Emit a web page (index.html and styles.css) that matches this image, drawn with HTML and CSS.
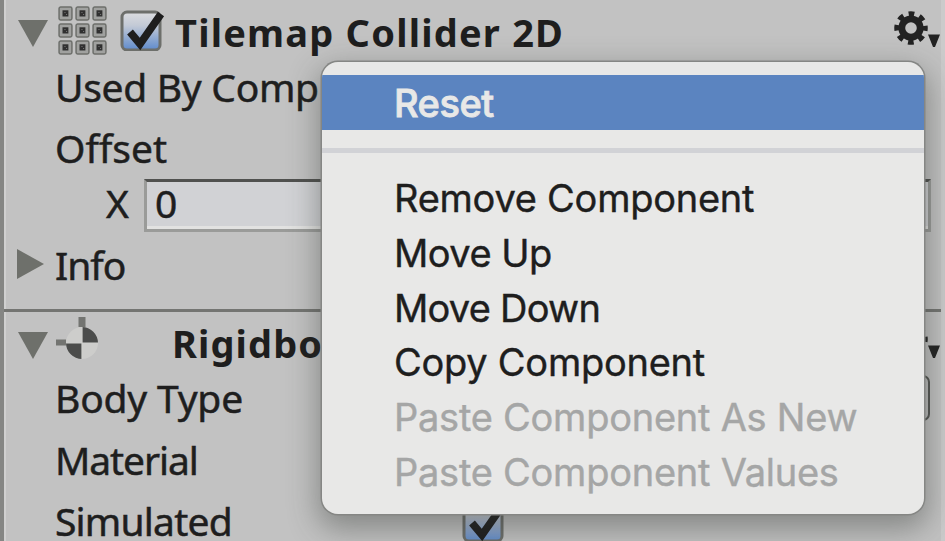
FILE: index.html
```
<!DOCTYPE html>
<html lang="en">
<head>
<meta charset="utf-8">
<title>Inspector</title>
<link rel="stylesheet" href="styles.css">
</head>
<body>
<svg class="defs" width="0" height="0">
  <defs>
    <linearGradient id="box" x1="0" y1="0" x2="0" y2="1">
      <stop offset="0" stop-color="#dcdddf"/><stop offset=".35" stop-color="#c3cad6"/><stop offset="1" stop-color="#5f8bcc"/>
    </linearGradient>
    <symbol id="check" viewBox="0 0 46 44">
      <rect x="2" y="5" width="38" height="38" rx="5" fill="url(#box)" stroke="#6d6f6b" stroke-width="3"/>
      <path d="M10 25l10 12L41 7" fill="none" stroke="#1e1e1e" stroke-width="7.500"/>
    </symbol>
    <symbol id="gear" viewBox="-18 -18 52 40">
      <g fill="none" stroke="#222">
        <circle r="9.2" stroke-width="6.800"/>
        <circle r="14" stroke-width="5.500" stroke-dasharray="5.6 5.4" stroke-dashoffset="2.8"/>
      </g>
      <path d="M17 6.500h12L24 19h-2z" fill="#222"/>
    </symbol>
    <symbol id="tile" viewBox="0 0 14 14">
      <rect x="1" y="1" width="12" height="12" rx="1.5" fill="#a0a19f" stroke="#6d6f6b" stroke-width="1.4"/>
      <path d="M4.200 4h5.500v5.800H4.200z" fill="#303030"/><path d="M6 6h1M7.500 8h1" stroke="#777"/>
    </symbol>
  </defs>
</svg>
<div class="inspector">
  <section class="component">
    <header class="head">
      <svg class="arrow" viewBox="0 0 30 30"><path d="M0 2h30L15 29z"/></svg>
      <svg class="tiles" viewBox="0 0 50 50">
        <use href="#tile" x="0" y="0" width="15" height="15"/><use href="#tile" x="17" y="0" width="15" height="15"/><use href="#tile" x="34" y="0" width="15" height="15"/>
        <use href="#tile" x="0" y="17" width="15" height="15"/><use href="#tile" x="17" y="17" width="15" height="15"/><use href="#tile" x="34" y="17" width="15" height="15"/>
        <use href="#tile" x="0" y="34" width="15" height="15"/><use href="#tile" x="17" y="34" width="15" height="15"/><use href="#tile" x="34" y="34" width="15" height="15"/>
      </svg>
      <svg class="check"><use href="#check"/></svg>
      <h2>Tilemap Collider 2D</h2>
      <svg class="gear"><use href="#gear"/></svg>
    </header>
    <div class="row used">Used By Comp</div>
    <div class="row offset">Offset</div>
    <div class="row vector"><span class="axis">X</span><span class="field">0</span></div>
    <div class="row foldout"><svg class="arrow" viewBox="0 0 30 30"><path d="M1 0v30L28 15z"/></svg><span class="info">Info</span></div>
  </section>
  <section class="component">
    <header class="head">
      <svg class="arrow" viewBox="0 0 30 30"><path d="M0 2h30L15 29z"/></svg>
      <svg class="body-icon" viewBox="0 0 44 44">
        <circle cx="26" cy="27" r="16" fill="#cdcdcb"/>
        <path d="M26 27V11a16 16 0 0 1 16 16zM26 27v16a16 16 0 0 1-16-16z" fill="#4b4c4b"/>
        <path d="M22.500 1h7v10h-7zM0 23.500h10v6H0z" fill="#737471"/>
        <path d="M26 11v32M10 27h32" stroke="#d0d0ce" stroke-width="1.200"/>
      </svg>
      <h2 class="rigid">Rigidbo</h2>
      <svg class="gear"><use href="#gear"/></svg>
    </header>
    <div class="row type">Body Type<span class="popup"></span></div>
    <div class="row material">Material</div>
    <div class="row simulated"><span>Simulated</span><svg class="check"><use href="#check"/></svg></div>
  </section>
</div>
<div class="menu">
  <div class="item active">Reset</div>
  <div class="separator"></div>
  <div class="item remove">Remove Component</div>
  <div class="item up">Move Up</div>
  <div class="item down">Move Down</div>
  <div class="item copy">Copy Component</div>
  <div class="item disabled new">Paste Component As New</div>
  <div class="item disabled values">Paste Component Values</div>
</div>
</body>
</html>
```
FILE: styles.css
```
* { box-sizing: border-box; }
body {
  margin: 0;
  width: 945px;
  height: 541px;
  overflow: hidden;
  position: relative;
  background: #c2c2c2;
  color: #1e1e1e;
  font: 39px/1 "Noto Sans", "Open Sans", sans-serif;
}
.defs { position: absolute; }
svg { display: block; flex: none; overflow: visible; }
.inspector {
  height: 541px;
  overflow: hidden;
  border-left: 4px solid #858684;
  border-right: 4px solid #cbcbcb;
  box-shadow: inset 2px 0 #d0d0d0;
}
.component { height: 309px; }
.component + .component { border-top: 3px solid #747572; height: 232px; }
.head { display: flex; height: 55px; padding: 7px 0 0 14px; align-items: center; }
.component + .component .head { padding-top: 8px; }
h2 { margin: 1px 0 0 9px; font-size: 38px; line-height: 48px; font-weight: 700; letter-spacing: 1.2px; white-space: nowrap; }
.arrow { width: 30px; height: 30px; fill: #6e706b; }
.head .arrow { margin-top: 4px; }
.component + .component .head .arrow { margin-top: 2px; }
.tiles { width: 50px; height: 50px; margin-left: 10px; }
.head .check { width: 46px; height: 44px; margin: -5px 0 0 12px; }
.gear { width: 52px; height: 40px; margin: -3px -4px 0 auto; }
.component + .component .gear { margin-top: -6px; }
.body-icon { width: 44px; height: 44px; margin: -12px 0 0 8px; }
.rigid { margin: -1px 0 0 72px; letter-spacing: 1.1px; }
.row {
  height: 62px;
  padding: 0 0 2px 51px;
  display: flex;
  align-items: center;
  white-space: nowrap;
  -webkit-text-stroke: .5px;
}
.used { padding-bottom: 0; letter-spacing: -.3px; }
.vector { height: 54px; padding: 0 0 1px 102px; }
.axis { width: 38px; padding-bottom: 6px; }
.field {
  width: 787px;
  height: 53px;
  padding: 0 0 0 8px;
  line-height: 41px;
  background: #d1d2d5;
  border: 3px solid #9a9b99;
  border-top-color: #50514f;
  box-shadow: inset 0 -3px #e2e2e1;
}
.foldout { padding: 0 0 0 12px; letter-spacing: -1px; }
.info { margin-left: 9px; }
.type { letter-spacing: -.2px; padding-bottom: 1px; }
.popup { width: 500px; height: 46px; margin-left: auto; margin-right: 11px; border: 2px solid #555654; border-radius: 7px; background: #bdbdbd; }
.material { letter-spacing: -1.100px; }
.simulated { height: 53px; padding: 0 0 0 51px; letter-spacing: -.8px; align-items: flex-start; }
.simulated span { width: 407px; height: 53px; line-height: 59px; }
.simulated .check { width: 46px; height: 44px; margin-top: 7px; }
.menu {
  position: absolute;
  left: 322px;
  top: 62px;
  width: 602px;
  height: 452px;
  padding: 13px 0;
  border-radius: 16px;
  background: #e8e8e7;
  overflow: hidden;
  box-shadow: 0 0 0 1.5px #858684, 0 11px 30px 4px rgba(50, 55, 50, .42);
  font: 38px/56.8px Inter, sans-serif;
}
.item { height: 54.8px; padding-left: 72px; white-space: nowrap; letter-spacing: -.25px; -webkit-text-stroke: .4px; }
.active { height: 55px; line-height: 56px; background: #5b84c0; color: #e8e8e7; font-weight: 500; letter-spacing: -.5px; -webkit-text-stroke: .8px; }
.remove, .up, .down, .copy { line-height: 55.8px; }
.up { letter-spacing: -.5px; }
.down { letter-spacing: -.75px; }
.separator { height: 5px; margin: 18px 0; background: #d1d2d6; }
.disabled { color: #a5a6a6; line-height: 55.8px; }
```
